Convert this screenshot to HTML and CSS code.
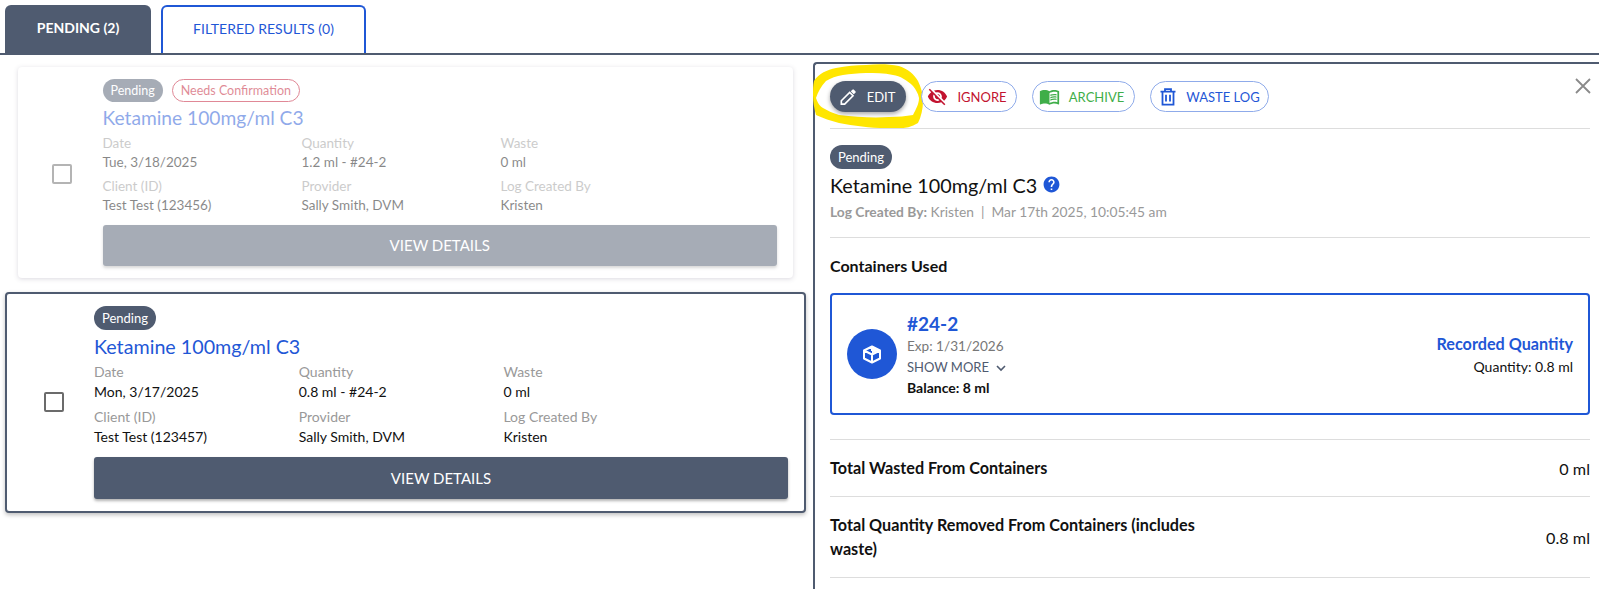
FILE: index.html
```html
<!DOCTYPE html>
<html>
	<head>
		<meta charset="utf-8">
		<title>Pending logs</title>
		<link rel="stylesheet" href="styles.css">
	</head>
	<body>
		<nav class="tabs">
			<button class="tab tab-active">PENDING (2)</button>
			<button class="tab tab-other">FILTERED RESULTS (0)</button>
		</nav>

		<main class="layout">
			<section class="list">
				<article class="log-card log-card-faded">
					<div class="check-col"><span class="check"></span></div>
					<div class="log-body">
						<div class="badges">
							<span class="badge">Pending</span>
							<span class="badge badge-warn">Needs Confirmation</span>
						</div>
						<h2 class="log-title">Ketamine 100mg/ml C3</h2>
						<div class="log-grid">
							<div><div class="label">Date</div><div>Tue, 3/18/2025</div></div>
							<div><div class="label">Quantity</div><div>1.2 ml - #24-2</div></div>
							<div><div class="label">Waste</div><div>0 ml</div></div>
							<div><div class="label">Client (ID)</div><div>Test Test (123456)</div></div>
							<div><div class="label">Provider</div><div>Sally Smith, DVM</div></div>
							<div><div class="label">Log Created By</div><div>Kristen</div></div>
						</div>
						<button class="view-btn">VIEW DETAILS</button>
					</div>
				</article>

				<article class="log-card log-card-selected">
					<div class="check-col"><span class="check"></span></div>
					<div class="log-body">
						<div class="badges">
							<span class="badge">Pending</span>
						</div>
						<h2 class="log-title">Ketamine 100mg/ml C3</h2>
						<div class="log-grid">
							<div><div class="label">Date</div><div>Mon, 3/17/2025</div></div>
							<div><div class="label">Quantity</div><div>0.8 ml - #24-2</div></div>
							<div><div class="label">Waste</div><div>0 ml</div></div>
							<div><div class="label">Client (ID)</div><div>Test Test (123457)</div></div>
							<div><div class="label">Provider</div><div>Sally Smith, DVM</div></div>
							<div><div class="label">Log Created By</div><div>Kristen</div></div>
						</div>
						<button class="view-btn">VIEW DETAILS</button>
					</div>
				</article>
			</section>

			<aside class="detail">
				<!-- hand drawn marker highlight round the edit button -->
				<svg class="marker" width="112" height="66" viewBox="0 0 112 66">
					<path fill="#ffe600" fill-rule="evenodd" d="M1 17C6 9 14 6 23 4C33 2 43 1 53 1C64 0 76 0 86 2C95 5 101 10 105 17C108 23 110 30 110 37C110 45 108 53 105 59C97 64 88 65 80 64C62 65 43 62 26 59C18 57 10 54 3 51C1 44 0 37 0 31C0 26 0 21 1 17ZM3 34C5 40 7 42 10 44C15 47 20 49 26 51C43 53 60 54 76 53C85 53 93 52 100 51C103 45 106 40 106 34C105 29 103 26 100 22C94 16 87 12 80 11C71 9 62 9 53 9C45 9 37 10 30 11C23 12 18 14 13 17C8 22 5 28 3 34Z"/>
				</svg>

				<div class="toolbar">
					<button class="pill pill-edit">
						<svg class="pill-icon" width="20" height="20" viewBox="0 0 24 24"><path fill="none" stroke="#fff" stroke-width="2" d="M4 16.5V20.5H8L18 10.5L14 6.5Z"/><path fill="#fff" d="M15.3 5.2l3.6 3.6 2-2a1.2 1.2 0 000-1.7l-1.9-1.9a1.2 1.2 0 00-1.7 0z"/></svg>
						<span class="pill-text">EDIT</span>
					</button>
					<button class="pill pill-ignore">
						<svg width="21" height="21" viewBox="0 0 24 24"><path fill="#c2132f" d="M12 7c2.76 0 5 2.24 5 5 0 .65-.13 1.26-.36 1.83l2.92 2.92c1.51-1.26 2.7-2.89 3.43-4.75-1.73-4.39-6-7.5-11-7.5-1.4 0-2.74.25-3.98.7l2.16 2.16C10.74 7.13 11.35 7 12 7zM2 4.27l2.28 2.28.46.46C3.08 8.3 1.78 10.02 1 12c1.73 4.39 6 7.5 11 7.5 1.55 0 3.03-.3 4.38-.84l.42.42L19.73 22 21 20.73 3.27 3 2 4.27zM7.53 9.8l1.55 1.55c-.05.21-.08.43-.08.65 0 1.66 1.34 3 3 3 .22 0 .44-.03.65-.08l1.55 1.55c-.67.33-1.41.53-2.2.53-2.76 0-5-2.24-5-5 0-.79.2-1.53.53-2.2zm4.31-.78l3.15 3.15.02-.16c0-1.66-1.34-3-3-3l-.17.01z"/></svg>
						<span>IGNORE</span>
					</button>
					<button class="pill pill-archive">
						<svg width="21" height="21" viewBox="0 0 24 24"><path fill="#3fae49" d="M21 5c-1.11-.35-2.33-.5-3.5-.5-1.95 0-4.05.4-5.5 1.5-1.45-1.1-3.55-1.5-5.5-1.5S2.45 4.9 1 6v14.65c0 .25.25.5.5.5.1 0 .15-.05.25-.05C3.1 20.45 5.05 20 6.5 20c1.95 0 4.05.4 5.5 1.5 1.35-.85 3.8-1.5 5.5-1.5 1.65 0 3.35.3 4.75 1.05.1.05.15.05.25.05.25 0 .5-.25.5-.5V6c-.6-.45-1.25-.75-2-1zm0 13.5c-1.1-.35-2.3-.5-3.5-.5-1.7 0-4.15.65-5.5 1.5V8c1.35-.85 3.8-1.5 5.5-1.5 1.2 0 2.4.15 3.5.5v11.5z"/><path fill="#3fae49" d="M17.5 10.5c.88 0 1.73.09 2.5.26V9.24c-.79-.15-1.64-.24-2.5-.24-1.7 0-3.24.29-4.5.83v1.66c1.13-.64 2.7-.99 4.5-.99zM13 12.49v1.66c1.13-.64 2.7-.99 4.5-.99.88 0 1.73.09 2.5.26V11.9c-.79-.15-1.64-.24-2.5-.24-1.7 0-3.24.3-4.5.83zM17.5 14.33c-1.7 0-3.24.29-4.5.83v1.66c1.13-.64 2.7-.99 4.5-.99.88 0 1.73.09 2.5.26v-1.52c-.79-.16-1.64-.24-2.5-.24z"/></svg>
						<span>ARCHIVE</span>
					</button>
					<button class="pill pill-waste">
						<svg width="18" height="18" viewBox="0 0 18 18"><path fill="none" stroke="#1f57d6" stroke-width="1.8" d="M1.5 3.6H16.5M6 3.4V1.2H12V3.4M3.5 3.6V16.6H14.5V3.6M7 6.8V13.4M11 6.8V13.4"/></svg>
						<span>WASTE LOG</span>
					</button>
				</div>

				<button class="close-btn">
					<svg width="16" height="16" viewBox="0 0 16 16"><path fill="none" stroke="#8a8a8a" stroke-width="1.8" d="M1 1L15 15M15 1L1 15"/></svg>
				</button>

				<div class="detail-head">
					<span class="badge">Pending</span>
					<h2 class="detail-title">Ketamine 100mg/ml C3
						<svg class="help" width="19" height="19" viewBox="0 0 24 24"><path fill="#1f57d6" d="M12 2C6.48 2 2 6.48 2 12s4.48 10 10 10 10-4.48 10-10S17.52 2 12 2zm1 17h-2v-2h2v2zm2.07-7.75l-.9.92C13.45 12.9 13 13.5 13 15h-2v-.5c0-1.1.45-2.1 1.17-2.83l1.24-1.26c.37-.36.59-.86.59-1.41 0-1.1-.9-2-2-2s-2 .9-2 2H8c0-2.21 1.79-4 4-4s4 1.79 4 4c0 .88-.36 1.68-.93 2.25z"/></svg>
					</h2>
					<p class="detail-meta"><b>Log Created By:</b> Kristen &nbsp;|&nbsp; Mar 17th 2025, 10:05:45 am</p>
				</div>

				<div class="containers">
					<h3 class="section-title">Containers Used</h3>
					<div class="container-box">
						<div class="box-icon">
							<svg width="22" height="22" viewBox="0 0 22 22"><path fill="none" stroke="#fff" stroke-width="2" stroke-linejoin="round" d="M3 7.5L11 3.5L19 7.5V15.5L11 19.5L3 15.5ZM3 7.5L11 11.5L19 7.5M11 11.5V19.5M11 3.5V8"/><path fill="#fff" d="M11 4L18 7.5L11 10.5Z"/></svg>
						</div>
						<div class="box-info">
							<div class="box-name">#24-2</div>
							<div class="box-exp">Exp: 1/31/2026</div>
							<div class="box-more">SHOW MORE
								<svg width="10" height="7" viewBox="0 0 10 7"><path fill="none" stroke="#4f5b70" stroke-width="1.6" d="M1 1L5 5L9 1"/></svg>
							</div>
							<div class="box-balance">Balance: 8 ml</div>
						</div>
						<div class="box-qty">
							<div class="box-qty-title">Recorded Quantity</div>
							<div class="box-qty-value">Quantity: 0.8 ml</div>
						</div>
					</div>
				</div>

				<div class="total-row">
					<div class="total-label">Total Wasted From Containers</div>
					<div>0 ml</div>
				</div>
				<div class="total-row total-row-tall">
					<div class="total-label">Total Quantity Removed From Containers (includes waste)</div>
					<div>0.8 ml</div>
				</div>
			</aside>
		</main>
	</body>
</html>
```

FILE: styles.css
```css
html,
body {
	margin: 0;
	height: 100%;
	overflow: hidden;
	background-color: #ffffff;
	color: #111111;
	font-family: "Lato", "Liberation Sans", sans-serif;
	font-size: 14px;
}

button {
	font-family: inherit;
	cursor: pointer;
}

/* tabs */
.tabs {
	display: flex;
	gap: 10px;
	height: 48px;
	padding: 5px 0 0 5px;
	border-bottom: 2px solid #4f5b70;
}

.tab {
	height: 48px;
	border-radius: 6px 6px 0 0;
	font-size: 14px;
	padding: 0 0 4px 0;
}

.tab-active {
	width: 146px;
	background-color: #4f5b70;
	border: 0;
	color: #ffffff;
	font-weight: 700;
}

.tab-other {
	width: 205px;
	background-color: #ffffff;
	border: 2px solid #1f57d6;
	border-bottom: 0;
	color: #1f57d6;
}

/* two columns */
.layout {
	display: flex;
	height: calc(100% - 55px);
}

.list {
	flex: 0 0 806px;
	box-sizing: border-box;
	padding: 12px 0 0 5px;
	display: flex;
	flex-direction: column;
	gap: 14px;
}

/* log cards */
.log-card {
	display: flex;
	background-color: #ffffff;
	border-radius: 4px;
}

.log-card-faded {
	margin: 0 13px;
	opacity: 0.5;
	font-size: 13.5px;
	box-shadow: 0 1px 4px rgba(60, 50, 90, 0.35);
	padding: 12px 16px 12px 0;
}

.log-card-selected {
	border: 2px solid #4f5b70;
	box-shadow: 0 2px 4px rgba(0, 0, 0, 0.25);
	padding: 12px 16px 12px 0;
}

.check-col {
	display: flex;
	align-items: center;
	justify-content: center;
	box-sizing: border-box;
	flex: 0 0 87px;
	padding: 0 0 0 6px;
}

.log-card-faded .check-col {
	flex-basis: 84.5px;
	padding: 4px 0 0 4px;
}

.check {
	display: block;
	box-sizing: border-box;
	width: 20px;
	height: 20px;
	border: 2px solid #6b6b6b;
	border-radius: 2px;
}

.log-body {
	flex: 1;
}

.badges {
	display: flex;
	gap: 9px;
}

.badge {
	display: inline-block;
	height: 24px;
	line-height: 24px;
	padding: 0 8px;
	border-radius: 12px;
	background-color: #4f5b70;
	color: #ffffff;
	font-size: 13px;
}

.log-card-faded .badge {
	height: 23px;
	line-height: 23px;
	font-size: 12.5px;
}

.log-card-faded .badge-warn {
	background-color: #ffffff;
	border: 1px solid #c2132f;
	color: #c2132f;
	height: 21px;
	line-height: 21px;
}

.log-title {
	margin: 5px 0 3px 0;
	font-size: 19.7px;
	line-height: 24px;
	font-weight: 400;
	color: #1f57d6;
}

.log-card-faded .log-title {
	margin: 4px 0 3.5px 0;
	font-size: 19.2px;
}

.log-grid {
	display: grid;
	grid-template-columns: 29.5% 29.5% 1fr;
	row-gap: 5px;
	line-height: 20px;
}

.log-card-faded .log-grid {
	row-gap: 4px;
	line-height: 19.5px;
}

.label {
	color: #999999;
}

.view-btn {
	display: block;
	width: 100%;
	height: 42px;
	margin-top: 10px;
	background-color: #4f5b70;
	border: 0;
	border-radius: 3px;
	box-shadow: 0 2px 3px rgba(0, 0, 0, 0.3);
	color: #ffffff;
	font-size: 15px;
}

.log-card-faded .view-btn {
	height: 41px;
	margin-top: 9px;
}

/* detail panel */
.detail {
	position: relative;
	flex: 1;
	margin: 7px 0 0 7px;
	padding: 0 9px 0 15px;
	border-top: 2px solid #4f5b70;
	border-left: 2px solid #4f5b70;
	border-top-left-radius: 4px;
}

.marker {
	position: absolute;
	left: -2px;
	top: 0;
}

.toolbar {
	position: relative;
	display: flex;
	gap: 15px;
	padding: 17px 0 16px 0;
	border-bottom: 1px solid #dddddd;
}

.pill {
	display: flex;
	align-items: center;
	justify-content: center;
	gap: 9px;
	box-sizing: border-box;
	height: 31px;
	padding: 0;
	background-color: #ffffff;
	border: 1px solid #8fabea;
	border-radius: 16px;
	font-size: 13px;
}

.pill-edit {
	width: 76px;
	gap: 9px;
	padding-right: 3px;
	background-color: #4f5b70;
	border: 0;
	box-shadow: 0 2px 4px rgba(0, 0, 0, 0.35);
	color: #ffffff;
}

.pill-ignore {
	width: 96px;
	padding-right: 4px;
	color: #c2132f;
}

.pill-archive {
	width: 103px;
	padding-right: 4px;
	color: #3fae49;
}

.pill-waste {
	width: 119px;
	color: #1f57d6;
}

.close-btn {
	position: absolute;
	top: 13px;
	right: 7px;
	width: 18px;
	height: 18px;
	padding: 1px;
	background: none;
	border: 0;
}

.detail-head {
	padding: 16px 0 15px 0;
	border-bottom: 1px solid #dddddd;
}

.detail-title {
	display: flex;
	align-items: center;
	gap: 5px;
	margin: 4px 0 5px 0;
	font-size: 19.8px;
	line-height: 24px;
	font-weight: 400;
}

.help {
	margin-top: -2px;
}

.detail-meta {
	margin: 0;
	font-size: 13.8px;
	line-height: 20px;
	color: #999999;
}

.section-title {
	margin: 0;
	padding: 18px 0 17px 0;
	font-size: 16px;
	line-height: 20px;
	font-weight: 700;
}

.container-box {
	display: flex;
	align-items: center;
	box-sizing: border-box;
	height: 122px;
	padding: 0 15px;
	border: 2px solid #1f57d6;
	border-radius: 4px;
}

.box-icon {
	display: flex;
	align-items: center;
	justify-content: center;
	width: 50px;
	height: 50px;
	margin-right: 10px;
	border-radius: 50%;
	background-color: #1f57d6;
}

.box-info {
	flex: 1;
	padding-top: 2px;
}

.box-name {
	font-size: 19px;
	line-height: 24px;
	font-weight: 700;
	color: #1f57d6;
}

.box-exp {
	font-size: 13.6px;
	line-height: 20px;
	color: #777777;
}

.box-more {
	font-size: 13px;
	line-height: 22px;
	color: #4f5b70;
}

.box-more svg {
	margin-left: 4px;
}

.box-balance {
	line-height: 20px;
	font-weight: 700;
}

.box-qty {
	padding-top: 2px;
	text-align: right;
	line-height: 22px;
}

.box-qty-title {
	font-size: 16.2px;
	font-weight: 700;
	color: #1f57d6;
}

.box-qty-value {
	margin-top: 1px;
}

.containers {
	padding-bottom: 24px;
}

.total-row {
	display: flex;
	align-items: center;
	justify-content: space-between;
	height: 56px;
	border-top: 1px solid #dddddd;
	font-size: 16.2px;
}

.total-row-tall {
	height: 80px;
	border-bottom: 1px solid #dddddd;
}

.total-label {
	width: 370px;
	line-height: 24px;
	font-weight: 700;
}
```
